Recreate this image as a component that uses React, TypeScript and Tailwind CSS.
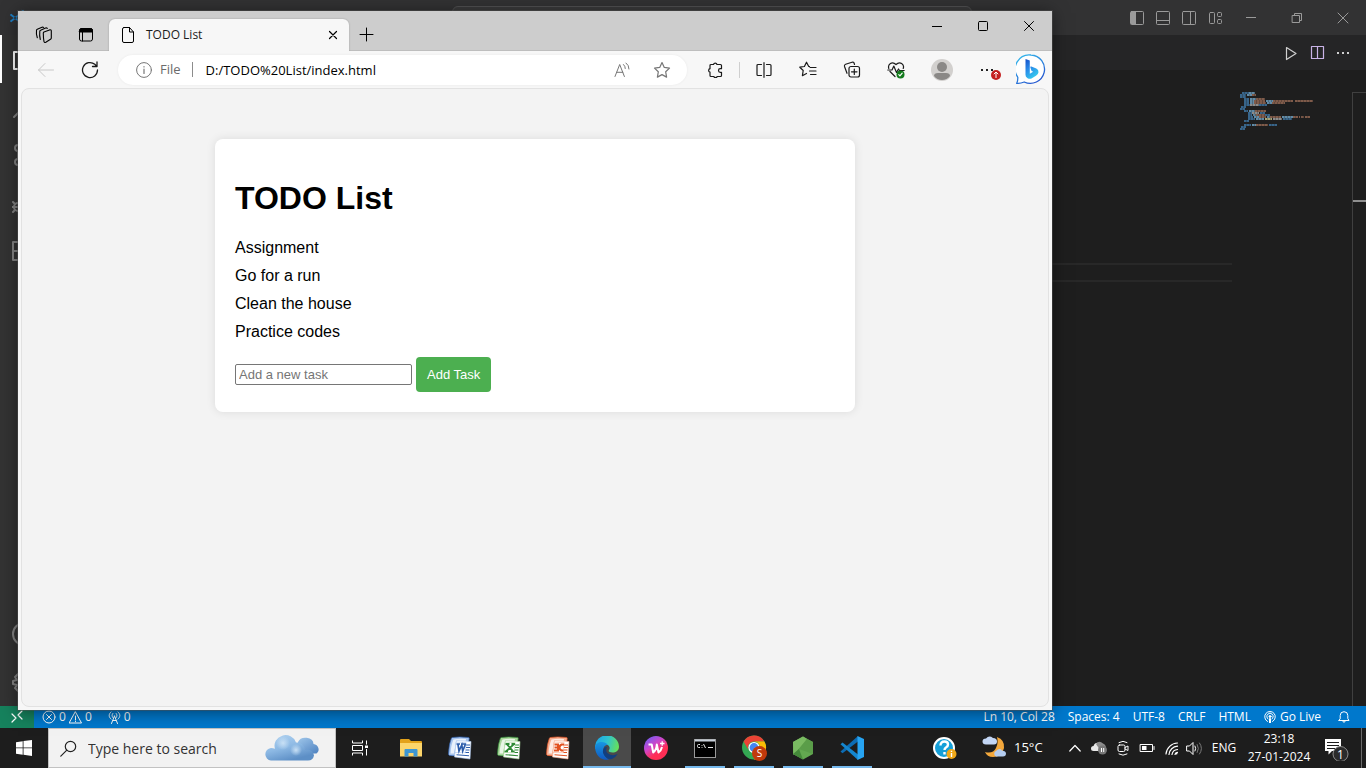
import { useState } from 'react';
import type { FormEvent, ReactNode } from 'react';

type GlyphProps = {
  size?: number;
  stroke?: string;
  width?: number;
  children: ReactNode;
};

function Glyph({ size = 16, stroke = 'currentColor', width = 1, children }: GlyphProps) {
  return (
    <svg
      width={size}
      height={size}
      viewBox={`0 0 ${size} ${size}`}
      fill="none"
      stroke={stroke}
      strokeWidth={width}
      strokeLinecap="round"
      strokeLinejoin="round"
      className="shrink-0"
      aria-hidden="true"
    >
      {children}
    </svg>
  );
}

type IconButtonProps = { label: string; className: string; children: ReactNode };

function IconButton({ label, className, children }: IconButtonProps) {
  return (
    <button type="button" aria-label={label} className={`flex shrink-0 items-center justify-center ${className}`}>
      {children}
    </button>
  );
}

/* ---------- Code editor behind the browser ---------- */

function EditorTitleBar() {
  return (
    <header className="flex h-[35px] shrink-0 items-center bg-[#323233] text-[#9a9a9a]">
      <div className="flex w-[300px] items-center pl-[9px]">
        <svg width="18" height="18" viewBox="0 0 24 24" aria-hidden="true">
          <path d="m1 8 2-1.700L20 20v3zM1 16l2 1.700L20 4V1z" fill="#1f7fc4" />
          <path d="m17 1 6 3v16l-6 3z" fill="#2a97e0" />
        </svg>
      </div>
      <div className="flex flex-1 justify-center self-stretch pt-[6px]">
        <div className="h-[22px] w-[520px] rounded-md border border-[#505051] bg-[#3a3a3b]" />
      </div>
      <div className="flex items-center">
        <IconButton label="Toggle primary side bar" className="w-[26px]">
          <Glyph>
            <rect x="1.500" y="1.500" width="13" height="13" rx="1" />
            <rect x="2" y="2" width="5" height="12" fill="currentColor" stroke="none" />
          </Glyph>
        </IconButton>
        <IconButton label="Toggle panel" className="w-[26px]">
          <Glyph>
            <rect x="1.500" y="1.500" width="13" height="13" rx="1" />
            <path d="M2 10.500h12" />
          </Glyph>
        </IconButton>
        <IconButton label="Toggle secondary side bar" className="w-[26px]">
          <Glyph>
            <rect x="1.500" y="1.500" width="13" height="13" rx="1" />
            <path d="M9.500 2v12" />
          </Glyph>
        </IconButton>
        <IconButton label="Customize layout" className="w-[26px]">
          <Glyph>
            <rect x="2.500" y="2.500" width="5" height="11" rx="1" />
            <rect x="10.500" y="2.500" width="4" height="4" rx="1" />
            <rect x="10.500" y="9.500" width="4" height="4" rx="1" />
          </Glyph>
        </IconButton>
        <IconButton label="Minimize editor" className="w-[46px]">
          <Glyph size={10}>
            <path d="M0 4.500h10" strokeLinecap="butt" />
          </Glyph>
        </IconButton>
        <IconButton label="Restore editor" className="w-[46px]">
          <Glyph size={12}>
            <path d="M1.500 3.500h7v7h-7zM3.500 3.500v-2h7v7h-2" />
          </Glyph>
        </IconButton>
        <IconButton label="Close editor" className="w-[46px]">
          <Glyph size={12}>
            <path d="m1 1 10 10M11 1 1 11" />
          </Glyph>
        </IconButton>
      </div>
    </header>
  );
}

function ActivityBar() {
  return (
    <nav aria-label="Activity bar" className="flex w-12 shrink-0 flex-col bg-[#333333] text-[#858585]">
      <button type="button" aria-label="Explorer" className="flex h-12 items-center justify-center border-l-2 border-white pr-[2px] text-white">
        <Glyph size={24} width={2}>
          <path d="M17 17v5H2V5h6M8 2h9l5 5v10H8z" />
        </Glyph>
      </button>
      <IconButton label="Search" className="h-12">
        <Glyph size={24} width={2}>
          <circle cx="15" cy="8.500" r="6.500" />
          <path d="m10 14-8 8" />
        </Glyph>
      </IconButton>
      <IconButton label="Source control" className="h-12">
        <Glyph size={24} width={2}>
          <circle cx="6" cy="5" r="3" />
          <circle cx="6" cy="19" r="3" />
          <circle cx="18" cy="8" r="3" />
          <path d="M6 8v8M18 11c0 4-8 2-11 5" />
        </Glyph>
      </IconButton>
      <IconButton label="Run and debug" className="h-12">
        <Glyph size={24} width={2}>
          <path d="M9 6V2l13 8-9 6" />
          <circle cx="6" cy="16" r="4" />
          <path d="M1 11l2 2M0 16h2M1 21l2-2M2 16h8" />
        </Glyph>
      </IconButton>
      <IconButton label="Extensions" className="h-12">
        <Glyph size={24} width={2}>
          <path d="M1 3h10v18H1zM1 12h19v9H1zM14 1h8v8h-8z" />
        </Glyph>
      </IconButton>
      <div className="flex-1" />
      <IconButton label="Accounts" className="h-12">
        <Glyph size={24} width={2}>
          <circle cx="12" cy="12" r="11" />
          <circle cx="12" cy="9" r="4" />
        </Glyph>
      </IconButton>
      <IconButton label="Manage" className="h-12">
        <Glyph size={24} width={2}>
          <circle cx="12" cy="12" r="3" />
          <path d="M10 2h4l1 4 3-2 3 3-2 3 4 1v3l-4 1 2 3-3 3-3-2-1 4h-4l-1-4-3 2-3-3 2-3-4-1v-3l4-1-2-3 3-3 3 2z" />
        </Glyph>
      </IconButton>
    </nav>
  );
}

type CodeRun = [number, number, number, string];

const tagBlue = '#38658a';
const attrBlue = '#628ba6';
const textOrange = '#7f5b4a';
const plainGrey = '#8a8a8a';

const minimapRuns: CodeRun[] = [
  [2, 0, 7, tagBlue], [9, 0, 6, attrBlue],
  [0, 2, 6, tagBlue], [7, 2, 5, attrBlue], [12, 2, 4, textOrange],
  [0, 4, 6, tagBlue],
  [4, 6, 5, tagBlue], [10, 6, 6, attrBlue], [16, 6, 9, textOrange],
  [4, 8, 5, tagBlue], [10, 8, 4, attrBlue], [14, 8, 11, textOrange], [26, 8, 7, attrBlue], [33, 8, 20, textOrange], [55, 8, 18, textOrange],
  [4, 10, 5, tagBlue], [10, 10, 4, attrBlue], [14, 10, 12, textOrange], [27, 10, 5, attrBlue], [32, 10, 13, textOrange],
  [4, 12, 6, tagBlue], [10, 12, 9, plainGrey], [19, 12, 8, tagBlue],
  [1, 14, 5, tagBlue],
  [0, 16, 5, tagBlue],
  [4, 18, 4, tagBlue], [9, 18, 6, attrBlue], [15, 18, 11, textOrange],
  [8, 20, 4, tagBlue], [12, 20, 7, plainGrey], [20, 20, 5, tagBlue],
  [8, 22, 4, tagBlue], [13, 22, 3, attrBlue], [16, 22, 9, textOrange], [25, 22, 5, tagBlue],
  [8, 24, 5, tagBlue], [14, 24, 5, attrBlue], [19, 24, 7, textOrange], [27, 24, 3, attrBlue], [30, 24, 11, textOrange], [42, 24, 11, attrBlue], [53, 24, 5, textOrange], [59, 24, 1, textOrange], [61, 24, 3, textOrange], [65, 24, 5, textOrange],
  [8, 26, 7, tagBlue], [16, 26, 8, attrBlue], [25, 26, 7, '#a3a37a'], [33, 26, 9, plainGrey], [43, 26, 9, tagBlue],
  [4, 28, 5, tagBlue],
  [4, 32, 7, tagBlue], [12, 32, 4, attrBlue], [16, 32, 12, textOrange], [29, 32, 8, tagBlue],
  [1, 34, 5, tagBlue],
  [0, 36, 5, tagBlue],
];

function Minimap() {
  return (
    <svg width="112" height="40" viewBox="0 0 112 40" aria-hidden="true" className="shrink-0">
      {minimapRuns.map(([x, y, length, color]) => (
        <path
          key={`${x}-${y}`}
          d={`M${x} ${y + 1}h${length}`}
          stroke={color}
          strokeWidth="1.800"
          strokeDasharray="2.700 0.300"
        />
      ))}
    </svg>
  );
}

function EditorArea() {
  return (
    <main className="flex min-w-0 flex-1 flex-col bg-[#1e1e1e]">
      <div className="flex h-[35px] shrink-0 items-center justify-end bg-[#252526] pr-[10px] text-[#d0d0d0]">
        <IconButton label="Run" className="w-[26px]">
          <Glyph width={1.200}>
            <path d="m3.500 2.500 9.500 6-9.500 6z" />
          </Glyph>
        </IconButton>
        <IconButton label="Split editor" className="w-[26px]">
          <Glyph width={1.200} stroke="#c9b3e6">
            <path d="M2.500 1.500h12v12h-12zM8.500 1.500v12" />
          </Glyph>
        </IconButton>
        <IconButton label="More editor actions" className="w-[26px]">
          <Glyph>
            <path d="M2 8h2M7 8h2M12 8h2" strokeWidth="2" strokeLinecap="butt" />
          </Glyph>
        </IconButton>
      </div>
      <div className="flex flex-1 pt-[22px]">
        <div className="flex-1 pt-[171px]">
          <div className="h-[19px] border-y-2 border-[#282828]" />
        </div>
        <div className="flex w-[120px] pl-2">
          <Minimap />
        </div>
        <div className="w-[14px] border-l border-t border-[#404040] pt-[107px]">
          <div className="h-[2px] bg-[#8f8f8f]" />
        </div>
      </div>
    </main>
  );
}

function StatusBar() {
  return (
    <footer className="flex h-[22px] shrink-0 items-center bg-[#0078cc] text-[12px] leading-[22px] text-white">
      <IconButton label="Open a remote window" className="h-full w-[34px] bg-[#16825d]">
        <Glyph size={14} width={1.200}>
          <path d="m2 4 4 4-4 4M12 1 8 5l4 4" />
        </Glyph>
      </IconButton>
      <button type="button" className="ml-2 flex items-center gap-[3px]">
        <Glyph size={14}>
          <circle cx="7" cy="7" r="6" />
          <path d="m4.500 4.500 5 5M9.500 4.500l-5 5" />
        </Glyph>
        <span>0</span>
        <Glyph size={13}>
          <path d="M6.500 1 12.500 12H.5zM6.500 5v4M6.500 10.500v.2" />
        </Glyph>
        <span>0</span>
      </button>
      <button type="button" className="ml-4 flex items-center gap-[3px]">
        <Glyph size={13}>
          <path d="M3 1C.5 3 .5 6 3 8M10 1c2.500 2 2.500 5 0 7M4.800 2.500c-1 1.500-1 2.500 0 4M8.200 2.500c1 1.500 1 2.500 0 4M6.500 5 3.500 12.500M6.500 5l3 7.500M5 9.500h3" />
        </Glyph>
        <span>0</span>
      </button>
      <div className="flex flex-1 items-center justify-end gap-[13px] pr-4">
        <button type="button">Ln 10, Col 28</button>
        <button type="button">Spaces: 4</button>
        <button type="button">UTF-8</button>
        <button type="button">CRLF</button>
        <button type="button">HTML</button>
        <button type="button" className="flex items-center gap-1">
          <Glyph size={12}>
            <path d="M3.500 10.500a5.300 5.300 0 1 1 5 0M4 8a3.200 3.200 0 1 1 4 0" />
            <circle cx="6" cy="5.500" r="1" fill="currentColor" />
            <path d="M6 8v3.500" strokeWidth="2" />
          </Glyph>
          <span>Go Live</span>
        </button>
        <IconButton label="Notifications" className="ml-1 w-3">
          <Glyph size={12}>
            <path d="M1 9.500h10L9.800 7.500V4.500a3.800 3.800 0 0 0-7.600 0v3zM4.800 10a1.200 1.200 0 0 0 2.400 0" />
          </Glyph>
        </IconButton>
      </div>
    </footer>
  );
}

/* ---------- Browser window ---------- */

function TabStrip() {
  return (
    <div className="flex h-10 shrink-0 border-b border-[#bebebe] bg-[#cdcdcd] pl-[5px]">
      <div className="flex pt-2">
        <IconButton label="Workspaces" className="w-[42px]">
          <Glyph size={18} width={1.100}>
            <path d="M8.300 7.200q0-.8.700-1.100l5.500-2.200q1.800-.5 1.800 1v7q0 .8-.8 1.300l-4.700 3q-1.300.7-1.800-.6-.7-4-.7-8.400z" />
            <path d="M5.300 13.500q-1-4-.5-8.200.1-.7.800-1l5-2.300q1-.4 1.700.3M2.300 11.800Q1 8 1.500 4.200q.1-.7.800-1L7 1.200q.9-.3 1.600.2" />
          </Glyph>
        </IconButton>
        <IconButton label="Tab actions" className="w-[42px]">
          <Glyph>
            <rect x="1.500" y="1.500" width="13" height="12.500" rx="2" />
            <path d="M1.500 3.500a2 2 0 0 1 2-2h9a2 2 0 0 1 2 2v1.500h-13z" fill="currentColor" />
            <path d="M4.500 5v9" />
          </Glyph>
        </IconButton>
      </div>
      <div className="mt-2 ml-[2px] -mb-px flex w-[240px] items-center rounded-t-md bg-[#f7f7f7] pr-2 pl-[11px] shadow-[0_0_2px_rgba(0,0,0,0.25)]">
        <Glyph>
          <path d="M4 .5h5.500L13.500 5v9a1.500 1.500 0 0 1-1.500 1.500H4A1.500 1.500 0 0 1 2.500 14V2A1.500 1.500 0 0 1 4 .5zM9.500.5V5h4" />
        </Glyph>
        <span className="ml-[10px] flex-1 text-[12px] text-[#1b1b1b]">TODO List</span>
        <IconButton label="Close tab" className="size-4">
          <Glyph size={10} width={1.200}>
            <path d="m1.500 1.500 7 7M8.500 1.500l-7 7" />
          </Glyph>
        </IconButton>
      </div>
      <IconButton label="New tab" className="w-[34px] pt-2">
        <Glyph size={15}>
          <path d="M7.500 1v13M1 7.500h13" />
        </Glyph>
      </IconButton>
      <div className="flex flex-1 items-start justify-end">
        <IconButton label="Minimize" className="h-[30px] w-[46px]">
          <Glyph size={10}>
            <path d="M0 5.500h10" strokeLinecap="butt" />
          </Glyph>
        </IconButton>
        <IconButton label="Maximize" className="h-[30px] w-[46px]">
          <Glyph size={10}>
            <rect x=".5" y=".5" width="9" height="9" rx="1" />
          </Glyph>
        </IconButton>
        <IconButton label="Close" className="h-[30px] w-[46px]">
          <Glyph size={10}>
            <path d="m.5.5 9 9M9.500.5l-9 9" />
          </Glyph>
        </IconButton>
      </div>
    </div>
  );
}

function BrowserToolbar() {
  return (
    <div className="flex h-[37px] shrink-0 items-center bg-[#f7f7f7] pr-[6px] pl-[6px] text-[#1b1b1b]">
      <IconButton label="Back" className="w-11 text-[#c8c8c8]">
        <Glyph size={18}>
          <path d="M16.500 9H1.500M8 2.500 1.500 9 8 15.500" />
        </Glyph>
      </IconButton>
      <IconButton label="Refresh" className="w-11">
        <Glyph size={18} width={1.300}>
          <path d="M16.500 9A7.500 7.500 0 1 1 13.800 3.300L16 5.500M16 1v4.500h-4.500" />
        </Glyph>
      </IconButton>
      <div className="mx-[6px] flex h-[30px] min-w-0 flex-1 items-center rounded-full bg-white pr-[15px] pl-[18px] text-[14px] shadow-[0_0_3px_rgba(0,0,0,0.06)]">
        <span className="text-[#767676]">
          <Glyph>
            <circle cx="8" cy="8" r="7.400" />
            <path d="M8 7.200v4.300M8 4.700v.2" strokeWidth="1.200" />
          </Glyph>
        </span>
        <span className="ml-2 text-[13px] text-[#6b6b6b]">File</span>
        <div className="ml-[11px] h-[15px] w-px bg-[#8c8c8c]" />
        <input
          aria-label="Address"
          defaultValue="D:/TODO%20List/index.html"
          className="ml-[13px] h-full min-w-0 flex-1 bg-transparent text-[13px] text-black outline-none"
        />
        <IconButton label="Read aloud" className="w-10 text-[#767676]">
          <Glyph>
            <path d="m1 14.500 4.700-12 4.700 12M2.800 10.300h6M9.500 2.500q1.800 1.500 1.800 4M12 1q3 2 3 6" />
          </Glyph>
        </IconButton>
        <IconButton label="Add to favorites" className="ml-[10px] w-[20px] text-[#767676]">
          <Glyph size={18} width={1.200}>
            <path d="m9 1.500 2.300 4.900 5.200.7-3.800 3.700.9 5.300L9 13.600l-4.600 2.500.9-5.300L1.500 7.100l5.200-.7z" />
          </Glyph>
        </IconButton>
      </div>
      <IconButton label="Extensions" className="w-11">
        <Glyph size={16} width={1.200}>
          <path d="M4 2.500h2.500A1.800 1.800 0 0 1 10 2.500h3.500a1 1 0 0 1 1 1v3.200h-1.200a1.800 1.800 0 0 0 0 3.600h1.200v3.200a1 1 0 0 1-1 1h-3.300a1.800 1.800 0 0 1-3.400 0H4a1 1 0 0 1-1-1v-3.300a1.800 1.800 0 0 1 0-3.500V3.500a1 1 0 0 1 1-1z" />
        </Glyph>
      </IconButton>
      <div className="mx-[2px] h-4 w-px bg-[#cfcfcf]" />
      <IconButton label="Split screen" className="w-11">
        <Glyph width={1.200}>
          <path d="M5.500 2.500H2a1 1 0 0 0-1 1v9a1 1 0 0 0 1 1h3.500M10.500 2.500H14a1 1 0 0 1 1 1v9a1 1 0 0 1-1 1h-3.500M8 .7v14.600" />
        </Glyph>
      </IconButton>
      <IconButton label="Favorites" className="w-11">
        <Glyph size={18} width={1.200}>
          <path d="m10.500 5.500-.9-.2L7.500 1.200 5.400 5.500l-4.600.7L4.200 9.500l-.8 5.200 4.100-2.200M11 6.500h6M10.500 10h6.500M11.500 13.500H17" />
        </Glyph>
      </IconButton>
      <IconButton label="Collections" className="w-11">
        <Glyph size={18} width={1.200}>
          <rect x="6" y="5.500" width="10.500" height="10.500" rx="2" />
          <path d="M11.300 8v5.500M8.500 10.800H14M4 12.300 1.500 5.500Q1 3.800 2.600 3.200L9 1.200q1.700-.5 2.200 1.300l.3 1" />
        </Glyph>
      </IconButton>
      <IconButton label="Browser essentials" className="w-11">
        <Glyph size={18} width={1.200}>
          <path d="M1.800 7.500C.5 3.500 5-.5 9 3.500c4-4 8.700 0 7.200 4M3 10.500l5 5M.8 9H5l1.800-4 2.700 6.500L11.500 8l1 1.500h4.700" />
          <circle cx="13.500" cy="13.500" r="4" fill="#137a1c" stroke="none" />
          <path d="m11.800 13.700 1.100 1.100 2.300-2.700" stroke="#fff" />
        </Glyph>
      </IconButton>
      <IconButton label="Profile" className="w-12">
        <svg width="22" height="22" viewBox="0 0 22 22" aria-hidden="true">
          <circle cx="11" cy="11" r="11" fill="#d2d0ce" />
          <circle cx="11" cy="8" r="5" fill="#8a8886" />
          <path d="M3 17q0-3 4-3h8q4 0 4 3-3 4-8 4t-8-4" fill="#8a8886" />
        </svg>
      </IconButton>
      <IconButton label="Settings and more, update available" className="w-11">
        <svg width="26" height="22" viewBox="0 0 26 22" aria-hidden="true">
          <path d="M6 11h2M11 11h2M16 11h2" stroke="#222" strokeWidth="2" />
          <circle cx="21" cy="16" r="5" fill="#c42121" />
          <path d="M21 19v-6m-2.200 2.200L21 13l2.200 2.200" stroke="#fff" fill="none" />
        </svg>
      </IconButton>
      <IconButton label="Bing chat" className="ml-[6px] w-[30px]">
        <svg width="30" height="31" viewBox="0 0 30 31" aria-hidden="true">
          <defs>
            <linearGradient id="bingRing" x1="0" y1="0" x2="0.600" y2="1">
              <stop offset="0" stopColor="#35c1ee" />
              <stop offset="1" stopColor="#2458d0" />
            </linearGradient>
            <linearGradient id="bingLetter" x1="0" y1="0" x2="0.500" y2="1">
              <stop offset="0" stopColor="#1650c8" />
              <stop offset="0.500" stopColor="#2a8cea" />
              <stop offset="1" stopColor="#36c8ee" />
            </linearGradient>
          </defs>
          <path d="M15 1a14.200 14.200 0 1 1-6.800 27q-4 1.700-7.500 1.300 1.200-2 1.100-6A14.200 14.200 0 0 1 15 1z" fill="#fff" stroke="url(#bingRing)" strokeWidth="1.300" />
          <path d="m9.500 5 4.300 1.500v13.200l3.400-2-1.600-.8-1.300-3.600q-.2-1.200 1-.8l5 2q2.400 1.200 2.200 3.800-.3 2.300-2.500 3.500l-4.500 2.600q-1.800.9-3.500 0l-1-.7q-1.500-1-1.500-3z" fill="url(#bingLetter)" />
        </svg>
      </IconButton>
    </div>
  );
}

function TodoPage() {
  const [tasks, setTasks] = useState(['Assignment', 'Go for a run', 'Clean the house', 'Practice codes']);
  const [draft, setDraft] = useState('');

  const addTask = (event: FormEvent) => {
    event.preventDefault();
    const text = draft.trim();
    if (!text) return;
    setTasks([...tasks, text]);
    setDraft('');
  };

  return (
    <div className="mx-[3px] mb-[3px] flex-1 overflow-auto rounded-lg border border-[#e2e2e2] bg-[#f3f3f3] pt-[50px] font-['Liberation_Sans',Arial,sans-serif] text-black">
      <section className="mx-auto w-full max-w-[640px] rounded-lg bg-white p-5 shadow-[0_0_10px_rgba(0,0,0,0.1)]">
        <h1 className="mt-[21px] mb-[22px] text-[32px] leading-[37px] font-bold">TODO List</h1>
        <ul className="mb-4 flex flex-col gap-[10px] text-[16px] leading-[18px]">
          {tasks.map((task, index) => (
            <li key={`${index}-${task}`}>{task}</li>
          ))}
        </ul>
        <form onSubmit={addTask} className="flex items-center gap-1">
          <input
            type="text"
            aria-label="New task"
            placeholder="Add a new task"
            value={draft}
            onChange={(event) => setDraft(event.target.value)}
            className="h-[21px] w-[177px] rounded-xs border border-[#767676] bg-white px-[3px] text-[13px] leading-[15px] placeholder:text-[#757575]"
          />
          <button type="submit" className="rounded-sm bg-[#4caf50] px-[11px] py-[10px] text-[13px] leading-[15px] text-white">
            Add Task
          </button>
        </form>
      </section>
    </div>
  );
}

function BrowserWindow() {
  return (
    <div className="absolute top-[11px] right-[314px] bottom-[58px] left-[18px] flex flex-col bg-[#f7f7f7] text-black shadow-[0_0_0_1px_rgba(80,80,80,0.500),0_2px_16px_rgba(0,0,0,0.500)]">
      <TabStrip />
      <BrowserToolbar />
      <TodoPage />
    </div>
  );
}

/* ---------- Taskbar ---------- */

type AppState = 'idle' | 'running' | 'active';

function TaskbarApp({ label, state, children }: { label: string; state: AppState; children: ReactNode }) {
  const underline = { idle: 'w-10 bg-transparent', running: 'w-10 bg-[#76b9ed]', active: 'w-full bg-[#76b9ed]' }[state];
  const background = state === 'active' ? 'bg-[#4a4a4a]' : '';
  return (
    <button type="button" aria-label={label} className={`flex h-full w-12 flex-col items-center ${background}`}>
      <span className="flex flex-1 items-center pt-[2px]">{children}</span>
      <span className={`h-[2px] ${underline}`} />
    </button>
  );
}

type OfficeProps = { color: string; light: string; children: ReactNode };

function OfficeIcon({ color, light, children }: OfficeProps) {
  return (
    <svg width="24" height="24" viewBox="0 0 24 24" aria-hidden="true">
      <path d="M4.500 1.500Q11 .3 20.500 1.500q1 .2.700 1.200L19 18Q10 21 1.500 19.500.3 19 .5 17.500 1 8 3.300 2.500q.3-.8 1.200-1z" fill={light} stroke={color} strokeWidth=".7" />
      <path d="M5.500 3.500Q11 2.300 18 3l-.5 3H8L6 17.500H2.500Q3 9 5.500 3.500z" fill="#fff" opacity=".75" />
      <path d="m8.500 4.500 14.500 1L22 23 6.500 21z" fill="#fff" stroke={light} strokeWidth=".6" />
      <path d="M18 9h4M18 11.500h4M17.500 14h4M17 16.500h4M8.500 18.700l12.500 1" stroke={color} strokeWidth="1.100" />
      <path d="m8.200 6 10 .7-.9 10-10.300-.2z" fill="#fff" stroke={light} strokeWidth=".6" />
      <g fill="none" stroke={color}>{children}</g>
    </svg>
  );
}

function Clouds() {
  return (
    <svg width="56" height="26" viewBox="0 0 56 26" aria-hidden="true" className="shrink-0">
      <defs>
        <linearGradient id="cloudFront" x1="0" y1="0" x2="0.500" y2="1">
          <stop offset="0" stopColor="#b3d4f1" />
          <stop offset="0.550" stopColor="#8db9e4" />
          <stop offset="1" stopColor="#5d8fc6" />
        </linearGradient>
        <linearGradient id="cloudBack" x1="0" y1="0" x2="0.800" y2="1">
          <stop offset="0" stopColor="#9fc6ea" />
          <stop offset="1" stopColor="#5588c4" />
        </linearGradient>
        <radialGradient id="cloudShine">
          <stop offset="0" stopColor="#c8e0f5" />
          <stop offset="1" stopColor="#c8e0f5" stopOpacity="0" />
        </radialGradient>
      </defs>
      <path d="M34 7a8 6.500 0 0 1 15.500 2 6.300 5.500 0 0 1 3 9.500H34z" fill="url(#cloudBack)" />
      <path d="M7 25.500a6.500 6.300 0 0 1 0-12.500q2 0 4 .8A11 10.500 0 0 1 32 7.500a8 8 0 0 1 9 7.500q8-1 9 5.500-1 5-6 5z" fill="url(#cloudFront)" />
      <circle cx="19" cy="8" r="7" fill="url(#cloudShine)" />
      <circle cx="32" cy="15" r="6" fill="url(#cloudShine)" />
    </svg>
  );
}

function Taskbar() {
  return (
    <footer className="flex h-10 shrink-0 items-stretch bg-[#1d1d1d] text-white">
      <IconButton label="Start" className="w-12">
        <svg width="16" height="16" viewBox="0 0 16 16" fill="#fff" aria-hidden="true">
          <path d="M0 2.200 6.700 1.200v6.300H0zM7.500 1.100 16 0v7.500H7.500zM0 8.300h6.700v6.400L0 13.800zM7.500 8.300H16V16l-8.500-1.200z" />
        </svg>
      </IconButton>
      <label className="flex w-[288px] items-center border border-[#c2c2c2] bg-[#f2f2f2] pr-[15px] pl-[11px] text-[#222]">
        <Glyph size={17} width={1.200}>
          <circle cx="10.500" cy="6.500" r="5.200" />
          <path d="m6.800 10.200-6 6" />
        </Glyph>
        <input
          aria-label="Search"
          placeholder="Type here to search"
          className="ml-[11px] min-w-0 flex-1 bg-transparent text-[14px] outline-none placeholder:text-[#333]"
        />
        <Clouds />
      </label>
      <IconButton label="Task view" className="w-12">
        <Glyph size={16}>
          <path d="M.5.500v2.500h10V.5M.5 15.500V13h10v2.500M.5 5.500h10v5H.5zM14.500.500v4M14.500 9v6.500" strokeLinecap="butt" strokeLinejoin="miter" />
          <path d="M13 5.500h3v2.500h-3z" fill="currentColor" stroke="none" />
        </Glyph>
      </IconButton>
      <nav aria-label="Pinned apps" className="ml-[3px] flex gap-px">
        <TaskbarApp label="File Explorer" state="idle">
          <svg width="22" height="20" viewBox="0 0 22 20" aria-hidden="true">
            <path d="M0 2q0-1 1-1h8l2 2h10q1 0 1 1v14H0z" fill="#e3a21a" />
            <path d="M0 5h22v13.500H0z" fill="#fcd56b" />
            <path d="M4.500 18.500V12q0-1 1-1h11q1 0 1 1v6.500h-4V15h-5v3.500z" fill="#3d96d2" />
          </svg>
        </TaskbarApp>
        <TaskbarApp label="Word" state="idle">
          <OfficeIcon color="#2b5cab" light="#a8c5ee">
            <path d="M8.500 8H12M13 8h5M10 8.500l1 6.500 2.800-6 .9 6L17.500 8" strokeWidth="1.700" />
          </OfficeIcon>
        </TaskbarApp>
        <TaskbarApp label="Excel" state="idle">
          <OfficeIcon color="#2f8a35" light="#a8d69a">
            <path d="M8.500 8h4M14.500 8H18M10 8.500l5.500 6M16.500 8.500 9.500 15M7.500 15.300H11M14 15.300h3.500" strokeWidth="1.800" />
          </OfficeIcon>
        </TaskbarApp>
        <TaskbarApp label="PowerPoint" state="idle">
          <OfficeIcon color="#e2501f" light="#f6ad90">
            <path d="M8.500 8.500h3.500v6H8M8.500 11.500H12M18 8.500h-2.500q-2 1-2 3t2 3h2" strokeWidth="2" />
          </OfficeIcon>
        </TaskbarApp>
        <TaskbarApp label="Microsoft Edge" state="active">
          <svg width="24" height="24" viewBox="0 0 24 24" aria-hidden="true">
            <defs>
              <linearGradient id="edgeTop" x1="0" y1="0.300" x2="1" y2="0.500">
                <stop offset="0" stopColor="#1ba5e8" />
                <stop offset="0.500" stopColor="#2fc3cf" />
                <stop offset="1" stopColor="#66e05a" />
              </linearGradient>
              <linearGradient id="edgeSide" x1="0" y1="0" x2="0" y2="1">
                <stop offset="0" stopColor="#1797e2" />
                <stop offset="1" stopColor="#1058c0" />
              </linearGradient>
            </defs>
            <path d="M0 11a12 11.500 0 0 1 24-.5c0 4-3 6-6.500 6-3 0-4.500-1-3.500-2.500 2-3-1-6-4.500-6Q4 8 0 13z" fill="url(#edgeTop)" />
            <path d="M0 12c0-7 10-7.500 12.500-3.500Q8 10 8.200 14.500 8.500 20 14 23.700 2 25 0 12z" fill="url(#edgeSide)" />
            <path d="M9.500 11.500Q6.500 15 9 19q3 5 8 4 3.500-1.500 5.700-5Q17 20.500 13 17.500q-3-2.500-1-6.500z" fill="#123f7f" />
          </svg>
        </TaskbarApp>
        <TaskbarApp label="WPS Office" state="idle">
          <svg width="24" height="24" viewBox="0 0 24 24" aria-hidden="true">
            <defs>
              <linearGradient id="wps" x1="0" y1="0" x2="0.700" y2="1">
                <stop offset="0" stopColor="#5a62ff" />
                <stop offset="0.450" stopColor="#d045c8" />
                <stop offset="0.750" stopColor="#ff2e55" />
              </linearGradient>
            </defs>
            <circle cx="12" cy="12" r="12" fill="url(#wps)" />
            <path d="M4.500 8.500h3.200l1.500 8q3.300-2.500 3.600-8l1.700 8q2.700-2 3.500-5.500" fill="none" stroke="#fff" strokeWidth="2" strokeLinejoin="round" />
            <path d="M16 7.500h4.500M18.200 5.200v4.600" stroke="#fff" strokeWidth="1.300" />
          </svg>
        </TaskbarApp>
        <TaskbarApp label="Command Prompt" state="running">
          <svg width="22" height="19" viewBox="0 0 22 19" aria-hidden="true">
            <rect x=".5" y=".5" width="21" height="18" fill="#000" stroke="#9a9a9a" />
            <path d="M1 1.500h20" stroke="#c8d0da" strokeWidth="2" />
            <path d="M6 5.500H4.500q-1 0-1 1v1q0 1 1 1H6M8 6v.8M8 8v.8M9.500 5l2 4M14 8.500h5" fill="none" stroke="#e8e8e8" />
          </svg>
        </TaskbarApp>
        <TaskbarApp label="Google Chrome" state="running">
          <svg width="26" height="26" viewBox="0 0 26 26" aria-hidden="true">
            <circle cx="13" cy="12.500" r="12" fill="#34a853" />
            <path d="M2.600 6.500a12 12 0 0 1 20.800 0H13a6 6 0 0 0-5.200 9z" fill="#ea4335" />
            <path d="M23.400 6.500A12 12 0 0 1 13 24.500l5.200-9A6 6 0 0 0 13 6.500z" fill="#fbbc05" />
            <circle cx="13" cy="12.500" r="5.600" fill="#fff" />
            <circle cx="13" cy="12.500" r="4.400" fill="#4285f4" />
            <circle cx="18.500" cy="18.500" r="7.500" fill="#c1390c" />
            <text x="18.500" y="22" textAnchor="middle" fontSize="10" fill="#fff">S</text>
          </svg>
        </TaskbarApp>
        <TaskbarApp label="Node.js" state="running">
          <svg width="22" height="24" viewBox="0 0 22 24" aria-hidden="true">
            <path d="M11 .5 21 6v12l-10 5.500L1 18V6z" fill="#63a850" />
            <path d="m11 .5 4 2.500L1.500 19 1 6z" fill="#7abb62" />
            <path d="m15 3-8 10 14 5V6z" fill="#5a9d49" />
            <path d="m7 13 4 10.500L1 18z" fill="#458a3a" />
          </svg>
        </TaskbarApp>
        <TaskbarApp label="Visual Studio Code" state="running">
          <svg width="24" height="24" viewBox="0 0 24 24" aria-hidden="true">
            <path d="m.5 15.500 2 1.800L18 5.500V0z" fill="#0c6cb4" />
            <path d="m.5 8.300 2-1.700L18 18.500V24z" fill="#1486cf" />
            <path d="M17.500 0 24 3v18l-6.500 3z" fill="#27a4f2" />
          </svg>
        </TaskbarApp>
      </nav>
      <div className="flex flex-1 items-center justify-end text-[12px]">
        <IconButton label="Get help" className="mr-[25px] w-6">
          <svg width="24" height="24" viewBox="0 0 24 24" aria-hidden="true">
            <circle cx="11" cy="12" r="10" fill="#159fd8" stroke="#fff" strokeWidth="2" />
            <path d="M7.500 9.500q0-4 4-4 3.500 0 3.500 3 0 2-2 3-1.500 1-1.500 2.500M11.500 16v2.500" fill="none" stroke="#fff" strokeWidth="2.400" />
            <circle cx="18.500" cy="18" r="5" fill="#f0a818" />
            <path d="M18.500 17v4M18.500 14.700V16" stroke="#fff" strokeWidth="1.400" />
          </svg>
        </IconButton>
        <button type="button" className="mr-[17px] flex w-[64px] shrink-0 items-center gap-2">
          <svg width="24" height="24" viewBox="0 0 24 24" aria-hidden="true" className="shrink-0">
            <path d="M15 1q8 3 7 11-2 9-11 9-6 0-8-5 8 2 11-4 2.500-5 1-11z" fill="#f3a83c" />
            <path d="M4 8.500a3.500 3 0 0 1 0-6q3-3.500 7-.5 4 0 4 3.500 0 3-3 3z" fill="#c3d6f5" />
            <path d="M14 20.500a3 3 0 0 1 0-5.500q3.500-3.500 6-.5 4 .5 4 3 0 3-3 3z" fill="#b4cdf0" />
          </svg>
          <span className="text-[13px]">15°C</span>
        </button>
        <div className="flex shrink-0 items-center">
          <IconButton label="Show hidden icons" className="w-6">
            <Glyph size={12} width={1.200}>
              <path d="m.8 9 5.200-5.500L11.200 9" />
            </Glyph>
          </IconButton>
          <IconButton label="OneDrive paused" className="w-6">
            <svg width="16" height="14" viewBox="0 0 16 14" aria-hidden="true">
              <path d="M2.500 10a2.500 2.500 0 0 1 0-5Q4 1 8 2q3 0 4 4v4z" fill="#e8e8e8" />
              <path d="M5 3q3-4 7-.5 3 1 3 5H8z" fill="#8b8b8b" />
              <circle cx="11.500" cy="9" r="4.500" fill="#777" />
              <path d="M10.500 7v4M12.700 7v4" stroke="#fff" />
            </svg>
          </IconButton>
          <IconButton label="Meet now" className="w-6">
            <Glyph size={16}>
              <rect x="3" y="5" width="7" height="6.500" rx="1.500" />
              <path d="m10 7.500 3-1.500v4.500l-3-1.500M4 2.500q4-2.500 8 0M4 14q4 2.500 8 0" />
            </Glyph>
          </IconButton>
          <IconButton label="Battery" className="w-6">
            <Glyph size={16}>
              <path d="M1.500 4.500h12v7h-12zM15 6.500v3" strokeLinejoin="miter" />
              <path d="M3 6h4.500v4H3z" fill="currentColor" stroke="none" />
            </Glyph>
          </IconButton>
          <IconButton label="Network" className="w-6">
            <Glyph size={16} width={1.200}>
              <path d="M3 14A12 12 0 0 1 14.500 3M6 14.500a9 9 0 0 1 8.500-8.300M9 14.500a6 6 0 0 1 5.500-5M12 14.500q.5-2 2.500-2.200" />
              <circle cx="13.500" cy="13.500" r="1" fill="currentColor" stroke="none" />
            </Glyph>
          </IconButton>
          <IconButton label="Volume" className="w-[22px]">
            <Glyph size={17}>
              <path d="M1 6h2.500L7 2.500v12L3.500 11H1z" strokeLinejoin="miter" />
              <path d="M9 6q1.500 2.500 0 5" />
              <path d="M11.200 4.500q2.500 4 0 8M13.500 3q4 5.500 0 11" stroke="#7a7a7a" />
            </Glyph>
          </IconButton>
          <button type="button" className="ml-1 w-[30px] text-center">ENG</button>
          <button type="button" className="ml-[6px] w-[68px] text-center leading-[18px] whitespace-nowrap">
            <span className="block">23:18</span>
            <span className="block">27-01-2024</span>
          </button>
          <IconButton label="1 new notification" className="ml-3 w-[26px]">
            <svg width="26" height="26" viewBox="0 0 26 26" aria-hidden="true">
              <path d="M0 4h16v12H7l-3.500 3.500V16H0z" fill="#fff" />
              <path d="M2 7.500h12M2 10.500h12M2 13.500h8" stroke="#1d1d1d" />
              <circle cx="15.500" cy="19" r="7.500" fill="#2b2b2b" stroke="#8c8c8c" />
              <text x="15.500" y="23.500" textAnchor="middle" fontSize="12" fill="#fff">1</text>
            </svg>
          </IconButton>
          <button type="button" aria-label="Show desktop" className="ml-[10px] h-10 w-[5px] border-l border-[#6a6a6a]" />
        </div>
      </div>
    </footer>
  );
}

export default function App() {
  return (
    <div className="relative flex h-screen flex-col overflow-hidden bg-[#1e1e1e] font-['Open_Sans','Noto_Sans',sans-serif]">
      <div className="flex min-h-0 flex-1 flex-col">
        <EditorTitleBar />
        <div className="flex min-h-0 flex-1">
          <ActivityBar />
          <EditorArea />
        </div>
        <StatusBar />
      </div>
      <BrowserWindow />
      <Taskbar />
    </div>
  );
}
